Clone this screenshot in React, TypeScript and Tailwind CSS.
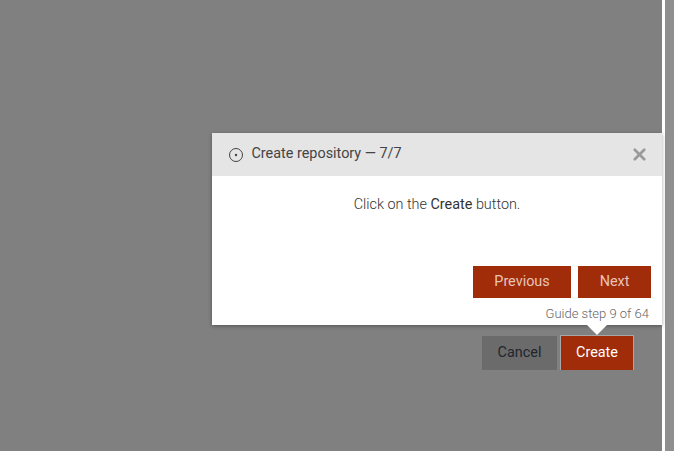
import { X } from 'lucide-react';

const App = () => {
  return (
    <div className="relative flex h-[451px] w-[677px] overflow-hidden bg-white font-['Roboto',sans-serif]">
      {/* Dimmed page */}
      <div className="relative h-full w-[662px] bg-[#808080]">
        {/* Buttons under the overlay */}
        <div className="absolute left-[482px] top-[335px] flex items-center gap-[3px]">
          <button className="mt-px h-[34px] w-[75px] bg-[#6b6b6b] text-[14.4px] text-[#20262e]">Cancel</button>
          <button className="h-[35px] w-[74px] border border-b-0 border-[#a8a8a8] bg-[#a02c09] text-[14.4px] text-white">Create</button>
        </div>

        {/* Guide popup */}
        <div className="absolute left-[212px] top-[133px] flex h-[192px] w-[450px] flex-col bg-white shadow-[0_1px_4px_rgba(0,0,0,0.35)]">
          <div className="flex h-[43px] items-center justify-between bg-[#e5e5e5] pb-px pl-[16px] pr-[13px]">
            <div className="flex items-center gap-[7.5px]">
              <svg width="16" height="16" viewBox="0 0 16 16" fill="none" className="mt-[2px]">
                <circle cx="8" cy="8" r="6.5" stroke="#444" strokeWidth="1" />
                <circle cx="8" cy="8" r="1.2" fill="#444" />
              </svg>
              <span className="text-[14.4px] text-[#444]">Create repository — 7/7</span>
            </div>
            <X className="mt-px h-[19px] w-[19px] text-[#999]" strokeWidth={3.4} />
          </div>
          <p className="mt-[19px] text-center text-[14.4px] font-light leading-[20px] text-[#333]">
            Click on the <span className="font-normal">Create</span> button.
          </p>
          <div className="mt-[51px] flex justify-end gap-[7px] pr-[11px]">
            <button className="h-[32px] w-[98px] bg-[#a02c09] pb-px text-[14.4px] text-[#e8c4b8]">Previous</button>
            <button className="h-[32px] w-[73px] bg-[#a02c09] pb-px text-[14.4px] text-[#e8c4b8]">Next</button>
          </div>
          <div className="mt-[8px] pr-[13px] text-right text-[13px] font-light leading-[16px] text-[#666]">Guide step 9 of 64</div>
          {/* Pointer */}
          <div className="absolute left-[375px] top-[192px] h-0 w-0 border-x-[10px] border-t-[10px] border-x-transparent border-t-white" />
        </div>
      </div>
      <div className="h-full w-[3px] bg-white" />
      <div className="h-full w-[9px] bg-[#8f8f8f]" />
    </div>
  );
};

export default App;
